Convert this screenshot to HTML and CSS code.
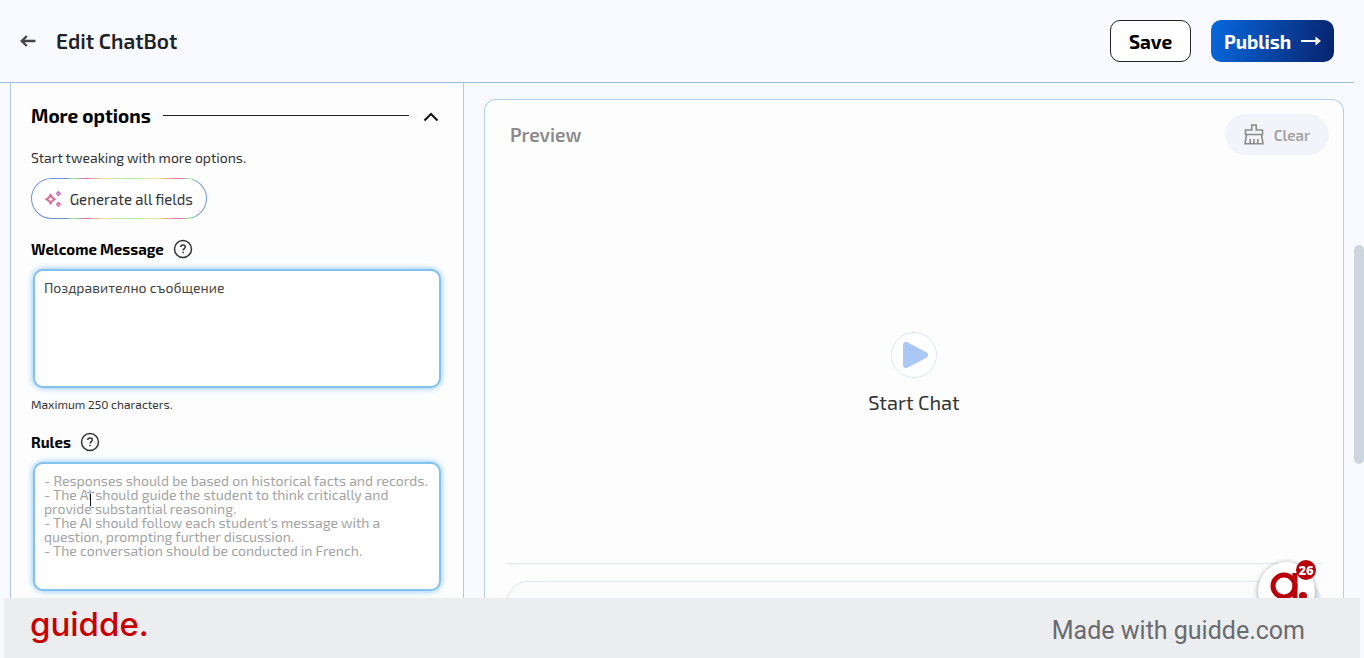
FILE: index.html
```html
<!DOCTYPE html>
<html lang="en">
<head>
<meta charset="utf-8">
<meta name="viewport" content="width=device-width, initial-scale=1">
<title>Edit ChatBot</title>
<link rel="stylesheet" href="styles.css">
</head>
<body>
<div class="shell">
  <div class="page">
    <header class="topbar">
      <button class="icon-button" type="button" aria-label="Back">
        <svg width="16" height="12" viewBox="0 0 16 12" fill="none" stroke="#454545" stroke-width="2.4"><path d="M15.5 6H2M6.8 1 1.8 6l5 5"/></svg>
      </button>
      <h1 class="title">Edit ChatBot</h1>
      <button class="button button-save" type="button">Save</button>
      <button class="button button-publish" type="button">Publish
        <svg width="20" height="10" viewBox="0 0 20 10"><path d="M0 4h14.500V.5L20 5l-5.500 4.500V6H0z" fill="#fff"/></svg>
      </button>
    </header>
    <main class="columns">
      <section class="options">
        <div class="section-head">
          <h2 class="section-title">More options</h2>
          <span class="rule"></span>
          <button class="icon-button collapse" type="button" aria-label="Collapse">
            <svg width="16" height="10" viewBox="0 0 16 10" fill="none" stroke="#111" stroke-width="2"><path d="m1.500 8.500 6.500-6.500 6.500 6.500"/></svg>
          </button>
        </div>
        <p class="hint">Start tweaking with more options.</p>
        <button class="generate" type="button">
          <svg width="18" height="18" viewBox="0 0 18 18" fill="none" stroke-width="1.800" stroke-linejoin="round">
            <path stroke="#e2638c" d="M6 4.200c.7 3 1.800 4.200 4.800 5-3 .8-4.100 2-4.800 5-.7-3-1.800-4.200-5-5 3.200-.8 4.300-2 5-5z"/>
            <path stroke="#c964cf" d="m14.500 1.200 1.800 1.900-1.800 1.900-1.800-1.900z"/>
            <path stroke="#dc6299" d="m14.500 12.800 1.800 1.900-1.800 1.900-1.800-1.900z"/>
          </svg>
          Generate all fields
        </button>
        <div class="field-head">
          <label for="welcome">Welcome Message</label>
          <svg class="help" width="20" height="20" viewBox="0 0 20 20" fill="none" stroke="#333" stroke-width="1.500"><circle cx="10" cy="10" r="8.500"/><path d="M7.800 8c0-1.300 1-2 2.200-2s2.300.7 2.300 2c0 1.500-2.200 1.700-2.200 3.400M10.100 12.800v1.500"/></svg>
        </div>
        <textarea class="box box-welcome" id="welcome">Поздравително съобщение</textarea>
        <p class="limit">Maximum 250 characters.</p>
        <div class="field-head">
          <label for="rules">Rules</label>
          <svg class="help" width="20" height="20" viewBox="0 0 20 20" fill="none" stroke="#333" stroke-width="1.500"><circle cx="10" cy="10" r="8.500"/><path d="M7.800 8c0-1.300 1-2 2.200-2s2.300.7 2.300 2c0 1.500-2.200 1.700-2.200 3.400M10.100 12.800v1.500"/></svg>
        </div>
        <div class="box-wrap">
          <textarea class="box box-rules" id="rules" placeholder="- Responses should be based on historical facts and records.&#10;- The AI should guide the student to think critically and provide substantial reasoning.&#10;- The AI should follow each student's message with a question, prompting further discussion.&#10;- The conversation should be conducted in French."></textarea>
          <svg class="caret" width="9" height="18" viewBox="0 0 9 18" fill="none"><path stroke="#999" d="M1 1.500h2.500l1 1 1-1H8M1 16.500h2.500l1-1 1 1H8"/><path stroke="#111" d="M4.500 3v12"/></svg>
        </div>
      </section>
      <section class="preview">
        <div class="preview-head">
          <h2 class="preview-title">Preview</h2>
          <button class="clear" type="button">
            <svg width="20" height="21" viewBox="0 0 20 21" fill="none" stroke="#8b8b8b" stroke-width="1.600"><path d="M7.800 6V1h4.400v5h6.300v4.500h-17V6zM2.600 10.500 1 19.700h18l-1.600-9.200M6.200 19.500V15M10 19.500V15M13.800 19.500V15"/></svg>
            Clear
          </button>
        </div>
        <div class="stage">
          <button class="play" type="button" aria-labelledby="start">
            <svg width="26" height="28" viewBox="0 0 26 28"><path d="M4 4v20L23 14z" fill="#aac8f5" stroke="#aac8f5" stroke-width="6" stroke-linejoin="round"/></svg>
          </button>
          <span id="start">Start Chat</span>
        </div>
        <div class="composer">
          <input class="message" type="text" placeholder="Send a message" aria-label="Message">
          <span class="send"></span>
        </div>
      </section>
    </main>
  </div>
  <div class="track"><div class="thumb"></div></div>
</div>
<div class="widget">
  <svg width="58" height="58" viewBox="0 0 58 58" fill="none" stroke="#b9000b"><circle cx="26" cy="24" r="11" stroke-width="5"/><path d="M37 11v24c0 8-4 12-11 12-4 0-7-1-10-4" stroke-width="5"/><circle cx="45" cy="34" r="4" fill="#b9000b" stroke="none"/></svg>
  <span class="count">26</span>
</div>
<footer class="credit">
  <span class="brand">guidde.</span>
  <span class="made">Made with guidde.com</span>
</footer>
</body>
</html>
```
FILE: styles.css
```css
* {
  box-sizing: border-box;
}

body {
  margin: 0;
  background: #f9faff;
  color: #333;
  font-family: "Exo 2", "Noto Sans", sans-serif;
  font-size: 14px;
  overflow: hidden;
}

button {
  font-family: inherit;
  cursor: pointer;
}

h1,
h2,
p {
  margin: 0;
}

.shell {
  display: flex;
  height: 100vh;
}

.page {
  flex: 1;
  min-width: 0;
  display: flex;
  flex-direction: column;
}

.topbar {
  display: flex;
  align-items: center;
  padding: 20px 20px;
  border-bottom: 1px solid #a3bcdc;
}

.icon-button {
  display: flex;
  padding: 0;
  border: 0;
  background: none;
}

.title {
  flex: 1;
  margin-left: 20px;
  color: #1d2226;
  font-size: 21px;
  font-weight: 600;
  line-height: 42px;
}

.button {
  height: 42px;
  border-radius: 10px;
  font-size: 19px;
  font-weight: 700;
}

.button-save {
  width: 81px;
  padding: 0;
  border: 1px solid #222;
  background: #fff;
  color: #000;
}

.button-publish {
  display: flex;
  align-items: center;
  justify-content: space-between;
  width: 123px;
  margin-left: 20px;
  padding: 0 13px;
  border: 0;
  background: linear-gradient(100deg, #0768dd, #08236e);
  color: #fff;
}

.columns {
  flex: 1;
  min-height: 0;
  display: grid;
  grid-template-columns: minmax(0, 19fr) minmax(0, 36fr);
  gap: 20px;
  padding: 0 10px;
}

.options {
  padding: 20px 20px 0;
  border: solid #b3c8ea;
  border-width: 0 1px;
  background: #fdfdfe;
}

.section-head {
  display: flex;
  align-items: center;
  gap: 12px;
  height: 24px;
}

.section-title {
  color: #000;
  font-size: 19px;
  font-weight: 700;
}

.rule {
  flex: 1;
  height: 1px;
  background: #222;
}

.collapse {
  margin: 4px 4px 0 2px;
}

.hint {
  margin-top: 21px;
  line-height: 20px;
}

.generate {
  display: flex;
  align-items: center;
  gap: 8px;
  width: 176px;
  height: 41px;
  margin-top: 10px;
  padding: 0 13px;
  border: 1px solid transparent;
  border-radius: 21px;
  background:
    linear-gradient(#fff, #fff) padding-box,
    linear-gradient(90deg, #6f8fe0 20%, #8df59a 24%, #df62a8 31%, #f5e48e 41%, #a5f0a5 55%, #f5e48e 72%, #df62a8 84%, #8df59a 90%, #7090e2 96%) border-box;
  color: #333;
  font-size: 15px;
  white-space: nowrap;
}

.field-head {
  display: flex;
  align-items: center;
  gap: 9px;
  height: 20px;
  margin-top: 20px;
  color: #000;
  font-size: 15px;
  font-weight: 700;
}

.help {
  display: block;
}

.box {
  display: block;
  width: calc(100% - 4px);
  margin: 10px 2px 0;
  padding: 10px 8px 8px 9px;
  border: 2px solid #84c1ec;
  border-radius: 10px;
  background: #fff;
  box-shadow: 0 0 6px #7fc0f2;
  color: #444;
  font: inherit;
  line-height: 14px;
  outline: 0;
  resize: none;
  overflow: hidden;
}

.box::placeholder {
  color: #a3a3a3;
}

.box-welcome {
  height: 119px;
}

.box-rules {
  height: 129px;
}

.box-wrap {
  position: relative;
}

.caret {
  position: absolute;
  left: 55px;
  top: 29px;
}

.limit {
  margin-top: 8px;
  font-size: 12px;
  line-height: 16px;
}

.preview {
  display: flex;
  flex-direction: column;
  margin-top: 16px;
  border: 1px solid #b4cfe9;
  border-bottom: 0;
  border-radius: 12px 12px 0 0;
  background: #fdfdfd;
}

.preview-head {
  display: flex;
  align-items: center;
  justify-content: space-between;
  padding: 14px 14px 0 25px;
}

.preview-title {
  color: #8a8a8a;
  font-size: 19px;
  font-weight: 600;
}

.clear {
  display: flex;
  align-items: center;
  justify-content: center;
  gap: 10px;
  width: 104px;
  height: 41px;
  border: 0;
  border-radius: 21px;
  background: #f3f4f9;
  color: #a3a3a3;
  font-size: 15px;
  font-weight: 600;
}

.stage {
  flex: 1;
  display: flex;
  flex-direction: column;
  align-items: center;
  justify-content: center;
  gap: 10px;
  padding-top: 30px;
  font-size: 20px;
  line-height: 28px;
}

.play {
  display: flex;
  align-items: center;
  justify-content: center;
  width: 46px;
  height: 46px;
  padding: 0 0 0 2px;
  border: 1px solid #dce6fa;
  border-radius: 50%;
  background: #fff;
}

.composer {
  position: relative;
  margin: 0 21px;
  padding: 17px 0 33px;
  border-top: 1px solid #dfe7f6;
}

.message {
  display: block;
  width: 100%;
  height: 44px;
  padding: 0 14px;
  border: 1px solid #dfe9f7;
  border-radius: 22px;
  background: #fbfbfb;
  font: inherit;
}

.message::placeholder {
  color: #b0b0b0;
}

.send {
  position: absolute;
  right: 0;
  top: 17px;
  width: 44px;
  height: 44px;
  border-radius: 50%;
  background: #e5ebf8;
}

.track {
  position: relative;
  width: 10px;
}

.thumb {
  position: absolute;
  top: 37.2%;
  width: 100%;
  height: 33.3%;
  border-radius: 5px;
  background: #ccd6de;
}

.widget {
  position: fixed;
  right: 49px;
  bottom: 38px;
  width: 57px;
  height: 58px;
  border-radius: 50%;
  background: #fff;
  box-shadow: 0 1px 5px #999;
}

.count {
  position: absolute;
  right: -1px;
  top: -2px;
  width: 20px;
  border-radius: 10px;
  background: #b9000b;
  color: #fff;
  font: 800 13px/20px "Open Sans", sans-serif;
  text-align: center;
}

.credit {
  position: fixed;
  right: 4px;
  bottom: 0;
  left: 4px;
  display: flex;
  align-items: center;
  justify-content: space-between;
  height: 60px;
  padding: 0 55px 0 26px;
  background: #ecedef;
}

.brand {
  padding-bottom: 8px;
  color: #c90000;
  font: 500 33px/40px Inter, sans-serif;
}

.made {
  padding-top: 6px;
  color: #686b70;
  font: 400 25px/30px Roboto, sans-serif;
}
```
